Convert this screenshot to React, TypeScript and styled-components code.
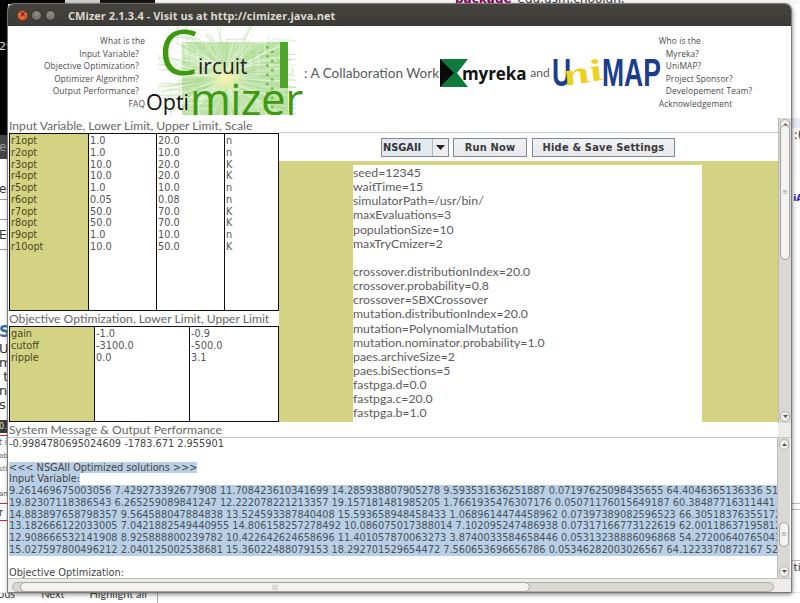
import React from "react";
import styled, { createGlobalStyle } from "styled-components";

const Global = createGlobalStyle`
  html, body { margin: 0; padding: 0; background: #fff; }
  #root { width: 800px; height: 603px; }
`;

const UI = `"Open Sans", "Noto Sans", sans-serif`;
const LT = `Lato, "Open Sans", sans-serif`;
const DV = `"DejaVu Sans", sans-serif`;
const OLIVE = "#d4d283";

const Desktop = styled.div`
  position: relative; width: 800px; height: 603px; overflow: hidden; background: #fff;
  display: flex; flex-direction: column;
`;
const TopStrip = styled.div`
  height: 4px; flex: none; display: flex; overflow: hidden;
`;
const TopSeg = styled.div<{ $w: number; $c: string }>`
  width: ${p => p.$w}px; flex: none; background: ${p => p.$c};
`;
const TopCode = styled.div`
  flex: 1; display: flex; gap: 6px; padding-left: 300px; margin-top: -8px; background: #f6f6f6; height: 20px;
  font: 400 12px/14px ${DV}; color: #333; white-space: nowrap;
`;
const Keyword = styled.b`
  color: #7f0055;
`;
const MiddleStrip = styled.div`
  height: 588px; flex: none; display: flex; justify-content: space-between;
`;
const Side = styled.div<{ $w: number }>`
  width: ${p => p.$w}px; flex: none; display: flex; flex-direction: column; overflow: hidden;
`;
const Block = styled.div<{ $h: number; $bg: string; $fg: string; $size: number; $line?: string; $bold?: boolean }>`
  height: ${p => p.$h}px; flex: none; background: ${p => p.$bg}; color: ${p => p.$fg};
  font: ${p => (p.$bold ? 700 : 400)} ${p => p.$size}px/${p => p.$h}px ${DV}; white-space: nowrap; text-indent: -1px;
  box-sizing: border-box; ${p => (p.$line ? `border-bottom: 1px solid ${p.$line};` : "")}
`;
const BottomStrip = styled.div`
  height: 11px; flex: none; overflow: hidden; display: flex; border-top: 1px solid #e4e4e4; box-sizing: border-box;
`;
const BottomText = styled.span<{ $ml: number }>`
  margin: -6px 0 0 ${p => p.$ml}px; font: 400 11px/14px ${LT}; color: #444; white-space: nowrap; height: 14px;
`;
const BottomRule = styled.div`
  width: 1px; height: 11px; background: #aaa; margin-left: 10px;
`;

const Win = styled.div`
  position: absolute; left: 8px; top: 4px; width: 783px; height: 588px;
  display: flex; flex-direction: column;
  border-radius: 6px 6px 0 0; background: #fff;
  box-shadow: 0 0 1px 1px #777, 1px 2px 5px rgba(0,0,0,.55);
`;
const TitleBar = styled.div`
  height: 22px; flex: none; display: flex; align-items: center; gap: 3px; padding-left: 9px;
  background: linear-gradient(#45443f, #3b3a36); border-radius: 6px 6px 0 0;
`;
const Dot = styled.span<{ $close?: boolean }>`
  width: 11px; height: 11px; border-radius: 50%; box-sizing: border-box;
  border: 1px solid ${p => (p.$close ? "#8f3513" : "#33322e")};
  background: ${p => (p.$close ? "radial-gradient(circle at 50% 35%, #f5824f, #dc4c1b)" : "radial-gradient(circle at 50% 30%, #8f8e88, #65645e)")};
  display: flex; align-items: center; justify-content: center;
  font: 700 8px/1 ${DV}; color: #40231a;
`;
const Title = styled.span`
  margin-left: 9px; font: 700 11px/1 ${UI}; color: #dcd9d0; letter-spacing: .05px; white-space: nowrap;
`;

const Header = styled.div`
  height: 92px; flex: none; display: flex; background: #fff;
`;
const LinkCol = styled.div<{ $w: number }>`
  width: ${p => p.$w}px; flex: none; padding-top: 9px; box-sizing: border-box;
`;
const Link = styled.div<{ $inset?: number; $right?: boolean }>`
  height: 12.5px; font: 400 8.4px/12.5px ${UI}; letter-spacing: .1px; color: #4a4a4a; white-space: nowrap;
  text-align: ${p => (p.$right ? "right" : "left")};
  ${p => (p.$right ? `padding-right: ${p.$inset ?? 0}px;` : `padding-left: ${p.$inset ?? 0}px;`)}
`;
const LogoBox = styled.div`
  width: 158px; height: 92px; margin-left: 1px; flex: none; position: relative;
`;
const Pcb = styled.svg`
  position: absolute; left: 12px; top: 0; width: 138px; height: 90px;
`;
const LogoC = styled.span`
  position: absolute; left: 13px; top: -6px; font: 400 62px/1 ${UI}; color: #3d9a0e;
`;
const LogoIrcuit = styled.span`
  position: absolute; left: 52px; top: 30px; font: 400 21px/1 ${UI}; color: #222;
`;
const LogoOpti = styled.span`
  position: absolute; left: 0; top: 65px; font: 400 21.5px/1 ${UI}; color: #111;
`;
const LogoMizer = styled.span`
  position: absolute; left: 44px; top: 50px; font: 400 44px/1 ${UI}; color: #3d9a0e; letter-spacing: -.5px;
`;
const Tagline = styled.div`
  width: 135px; flex: none; font: 400 13.6px/92px ${LT}; color: #5a5a5a; white-space: nowrap;
  padding-top: 1px; box-sizing: border-box; height: 92px;
`;
const MyrekaBox = styled.div`
  display: flex; align-items: center; height: 92px; flex: none; margin-top: 1px;
`;
const MyrekaMark = styled.svg`
  width: 30px; height: 30px; flex: none;
`;
const MyrekaText = styled.span`
  font: 700 17px/1 ${UI}; color: #111; margin-left: -7px; letter-spacing: -.1px; position: relative;
`;
const And = styled.span`
  font: 400 12px/1 ${LT}; color: #5a5a5a; margin: 0 2px 0 4px;
`;
const Uni = styled.div`
  width: 107px; height: 30px; flex: none; position: relative;
`;
const UniBlue = styled.span<{ $x: number }>`
  position: absolute; left: ${p => p.$x}px; top: -4px; font: 700 39px/38px "Liberation Sans", sans-serif;
  color: #1b3d8c; transform-origin: left center; transform: scaleX(.68);
`;
const UniYellow = styled.span`
  position: absolute; left: 11px; top: 2px; font: italic 700 31px/32px "Liberation Serif", serif; color: #f0d21c;
  transform: scaleX(1.55) rotate(-14deg); transform-origin: left center;
`;

const Upper = styled.div`
  height: 305px; flex: none; display: flex; background: #fff;
`;
const LeftCol = styled.div`
  width: 270px; margin-left: 1px; flex: none; display: flex; flex-direction: column;
`;
const Label = styled.div<{ $h: number }>`
  height: ${p => p.$h}px; flex: none; font: 400 12.15px/${p => p.$h}px ${LT}; color: #666; white-space: nowrap; background: #fff;
`;
const Grid = styled.div<{ $cols: string; $h: number }>`
  height: ${p => p.$h}px; flex: none; display: grid; grid-template-columns: ${p => p.$cols};
  box-sizing: border-box; border: 1px solid #111; gap: 1px; background: #111;
`;
const Col = styled.div<{ $head?: boolean }>`
  background: ${p => (p.$head ? OLIVE : "#fff")}; padding: 1px 0 0 1px; overflow: hidden;
`;
const Cell = styled.div<{ $head?: boolean }>`
  font: 400 9.75px/11.78px ${DV}; height: 11.78px; white-space: nowrap; color: ${p => (p.$head ? "#4c4a22" : "#555")};
`;
const RightCol = styled.div`
  flex: 1; margin-top: 14px; border-top: 1px solid #c8c8c8; display: flex; flex-direction: column; min-width: 0;
`;
const Toolbar = styled.div`
  height: 28px; flex: none; display: flex; align-items: center; padding-left: 102px; gap: 4px; background: #fff; box-sizing: border-box;
`;
const Combo = styled.div`
  width: 68px; height: 19px; box-sizing: border-box; border: 1px solid #7a8a99; display: flex; background: #eeeef1;
`;
const ComboVal = styled.div`
  flex: 1; font: 700 9.8px/17px ${DV}; color: #333; padding-left: 1px; background: #e4e8ef; border-right: 1px solid #a3b8cc;
`;
const ComboBtn = styled.div`
  width: 15px; display: flex; align-items: center; justify-content: center;
`;
const Tri = styled.svg`
  width: 9px; height: 5px;
`;
const Btn = styled.div<{ $w: number; $ml?: number }>`
  width: ${p => p.$w}px; height: 19px; box-sizing: border-box; border: 1px solid #7a8a99; margin-left: ${p => p.$ml ?? 0}px;
  background: linear-gradient(#f1f1f3, #e9e9ee); text-align: center;
  font: 700 9.9px/17px ${DV}; color: #3a3a3a; letter-spacing: .2px; white-space: nowrap;
`;
const Olive = styled.div`
  height: 261px; flex: none; background: ${OLIVE}; padding: 4px 0 0 74px; box-sizing: border-box; overflow: hidden;
`;
const Config = styled.div`
  width: 349px; height: 257px; background: #fff; overflow: hidden; padding-top: 1px; box-sizing: border-box;
`;
const ConfigLine = styled.div`
  height: 14.15px; font: 400 12.3px/14.15px ${LT}; color: #5c5c5c; white-space: nowrap;
`;
const VBar = styled.div<{ $h: number }>`
  width: 13px; height: ${p => p.$h}px; flex: none; background: #dad8d4; position: relative; border-left: 1px solid #bdbbb6; box-sizing: border-box;
`;
const Thumb = styled.div<{ $top: number; $h: number }>`
  position: absolute; left: 1px; right: 1px; top: ${p => p.$top}px; height: ${p => p.$h}px; background: #f4f3f1;
  border: 1px solid #a3a19c; border-radius: 6px; box-sizing: border-box;
  display: flex; align-items: center; justify-content: center; font: 400 7px/1 ${DV}; color: #9a9a96;
`;
const Arrow = styled.div<{ $bottom?: boolean }>`
  position: absolute; left: 1px; right: 1px; height: 11px; background: #f0efed; border: 1px solid #b2b0ab; border-radius: 6px; box-sizing: border-box;
  ${p => (p.$bottom ? "bottom: 1px;" : "top: 1px;")}
  display: flex; align-items: center; justify-content: center;
`;
const Lower = styled.div`
  flex: 1; min-height: 0; display: flex; flex-direction: column; background: #fff;
`;
const SysRow = styled.div`
  height: 14px; flex: none; display: flex; padding-left: 1px; border-bottom: 1px solid #c9c9c9;
`;
const SysFill = styled.div`
  flex: 1;
`;
const Corner = styled.div`
  width: 13px; flex: none; background: #edecea;
`;
const LogRow = styled.div`
  height: 140px; flex: none; display: flex;
`;
const Log = styled.div`
  width: 768px; margin-left: 1px; flex: none; overflow: hidden; background: #fff;
`;
const LogLine = styled.div`
  height: 11.78px; font: 400 9.75px/11.78px ${DV}; color: #444; white-space: nowrap; overflow: hidden;
`;
const Sel = styled.span`
  background: #b8cfe5; display: inline-block;
`;
const SelLine = styled(LogLine)`
  background: #b8cfe5; color: #47525c;
`;
const HBar = styled.div`
  flex: 1; background: #edecea; border-top: 1px solid #c4c2bd; box-sizing: border-box; padding: 3px 17px 0 4px;
`;
const HTrack = styled.div`
  height: 10px; background: #dad8d4; border-radius: 5px; border: 1px solid #b2b0ab; box-sizing: border-box; padding-left: 7px;
`;
const HThumb = styled.div`
  width: 510px; height: 10px; margin-top: -1px; background: #f4f3f1; border: 1px solid #a3a19c; border-radius: 5px; box-sizing: border-box;
  text-align: center; font: 400 6px/8px ${DV}; color: #9a9a96;
`;

const inputs = [
  ["r1opt", "1.0", "20.0", "n"], ["r2opt", "1.0", "10.0", "n"], ["r3opt", "10.0", "20.0", "K"], ["r4opt", "10.0", "20.0", "K"],
  ["r5opt", "1.0", "10.0", "n"], ["r6opt", "0.05", "0.08", "n"], ["r7opt", "50.0", "70.0", "K"], ["r8opt", "50.0", "70.0", "K"],
  ["r9opt", "1.0", "10.0", "n"], ["r10opt", "10.0", "50.0", "K"],
];
const objectives = [["gain", "-1.0", "-0.9"], ["cutoff", "-3100.0", "-500.0"], ["ripple", "0.0", "3.1"]];
const config = ["seed=12345", "waitTime=15", "simulatorPath=/usr/bin/", "maxEvaluations=3", "populationSize=10", "maxTryCmizer=2", "\u00a0",
  "crossover.distributionIndex=20.0", "crossover.probability=0.8", "crossover=SBXCrossover", "mutation.distributionIndex=20.0",
  "mutation=PolynomialMutation", "mutation.nominator.probability=1.0", "paes.archiveSize=2", "paes.biSections=5", "fastpga.d=0.0", "fastpga.c=20.0", "fastpga.b=1.0", "fastpga.a=20.0"];
const solutions = [
  "9.261469675003056 7.429273392677908 11.708423610341699 14.285938807905278 9.593531636251887 0.07197625098435655 64.4046365136336 51.2",
  "19.82307118386543 6.265259089841247 12.222078221213357 19.157181481985205 1.7661935476307176 0.05071176015649187 60.38487716311441",
  "14.883897658798357 9.564588047884838 13.524593387840408 15.593658948458433 1.0689614474458962 0.07397389082596523 66.30518376355172",
  "13.182666122033005 7.0421882549440955 14.806158257278492 10.086075017388014 7.102095247486938 0.07317166773122619 62.00118637195812",
  "12.908666532141908 8.925888800239782 10.422642624658696 11.401057870063273 3.8740033584658446 0.05313238886096868 54.27200640765043",
  "15.027597800496212 2.040125002538681 15.36022488079153 18.292701529654472 7.560653696656786 0.05346282003026567 64.1223370872167 52.1",
];

type B = { h: number; bg?: string; fg?: string; size?: number; text?: string; line?: string; bold?: boolean };
const leftBlocks: B[] = [
  { h: 33, bg: "#050505" }, { h: 20, bg: "#050505", fg: "#ddd", size: 11, text: "29" }, { h: 78, bg: "#050505" },
  { h: 24, bg: "#454545", fg: "#999", size: 12, text: "en" },
  { h: 19 }, { h: 22, fg: "#333", size: 12, text: "er", line: "#999" }, { h: 20, line: "#999" }, { h: 30, fg: "#333", size: 12, text: "EC", line: "#999" },
  { h: 71 }, { h: 21, fg: "#2a6fa8", size: 16, text: "S", bold: true },
  { h: 14, fg: "#333", size: 13, text: "Us" }, { h: 14, fg: "#333", size: 13, text: "m" }, { h: 14, fg: "#333", size: 13, text: "\u00a0t" },
  { h: 14, fg: "#333", size: 13, text: "nc" }, { h: 14, fg: "#333", size: 13, text: "s" }, { h: 8 },
  { h: 13, bg: "#3a3a3a", fg: "#ddd", size: 8, text: "0." }, { h: 3, line: "#d22" },
  { h: 14, fg: "#666", size: 8, text: "t i" }, { h: 13, fg: "#666", size: 7, text: "ab" }, { h: 13, fg: "#666", size: 7, text: "sti" }, { h: 12 },
  { h: 13, fg: "#555", size: 7, text: "an" }, { h: 3, line: "#d22" }, { h: 17, fg: "#333", size: 10, text: "r", line: "#d22" },
];
const rightBlocks: B[] = [
  { h: 114 }, { h: 10, bg: "#e6ebf7" }, { h: 14, fg: "#333", size: 12, text: "\u00a0:(" }, { h: 50 },
  { h: 12, fg: "#2222cc", size: 9, text: "\u00a0iA", bold: true }, { h: 300, line: "#bbb" }, { h: 6, line: "#bbb" }, { h: 51, line: "#bbb" },
  { h: 14, fg: "#444", size: 11, text: "\u00a0ti" },
];

// PCB artwork behind the logo: traces radiating from a glowing centre towards the edges of the board.
function pcbTraces() {
  let s = 7;
  const r = () => ((s = (s * 16807) % 2147483647) / 2147483647);
  const out: { d: string; o: number; c: string }[] = [];
  for (let i = 0; i < 260; i++) {
    const a = r() * Math.PI * 2;
    const r0 = 4 + r() * 14;
    const r1 = 20 + r() * 50;
    const x0 = 68 + Math.cos(a) * r0, y0 = 51 + Math.sin(a) * r0;
    const x1 = 68 + Math.cos(a) * r1 * 1.3, y1 = 51 + Math.sin(a) * r1 * .8;
    const horiz = r() > .5;
    const x2 = horiz ? x1 + (x1 > 68 ? 1 : -1) * r() * 30 : x1;
    const y2 = horiz ? y1 : y1 + (y1 > 51 ? 1 : -1) * r() * 30;
    out.push({
      d: `M${x0.toFixed(1)} ${y0.toFixed(1)}L${x1.toFixed(1)} ${y1.toFixed(1)}L${x2.toFixed(1)} ${y2.toFixed(1)}`,
      o: .3 + r() * .45,
      c: r() > .55 ? "#ffffff" : "#a5d78c",
    });
  }
  return out;
}
const traces = pcbTraces();

const ArrowIcon = ({ dir }: { dir: "up" | "down" }) => (
  <svg width="7" height="5" viewBox="0 0 7 5"><path d={dir === "up" ? "M3.5 1L6 4H1z" : "M3.5 4L6 1H1z"} fill="#555" /></svg>
);

const Strip = ({ items, w }: { items: B[]; w: number }) => (
  <Side $w={w}>
    {items.map((b, i) => (
      <Block key={i} $h={b.h} $bg={b.bg ?? "#fff"} $fg={b.fg ?? "#333"} $size={b.size ?? 10} $line={b.line} $bold={b.bold}>{b.text}</Block>
    ))}
  </Side>
);

export default function App() {
  return (
    <Desktop>
      <Global />
      <TopStrip>
        <TopSeg $w={65} $c="#050505" />
        <TopSeg $w={35} $c="#cfcfcf" />
        <TopSeg $w={55} $c="#151515" />
        <TopCode><Keyword>package</Keyword><span>edu.usm.choojun;</span></TopCode>
      </TopStrip>
      <MiddleStrip>
        <Strip items={leftBlocks} w={8} />
        <Strip items={rightBlocks} w={9} />
      </MiddleStrip>
      <BottomStrip>
        <BottomText $ml={-2}>ous</BottomText>
        <BottomText $ml={26}>Next</BottomText>
        <BottomText $ml={25}>Highlight all</BottomText>
        <BottomRule />
      </BottomStrip>

      <Win>
        <TitleBar>
          <Dot $close>×</Dot>
          <Dot />
          <Dot />
          <Title>CMizer 2.1.3.4 - Visit us at http://cimizer.java.net</Title>
        </TitleBar>
        <Header>
          <LinkCol $w={137}>
            <Link $right>What is the</Link>
            <Link $right $inset={6}>Input Variable?</Link>
            <Link $right $inset={6}>Objective Optimization?</Link>
            <Link $right $inset={6}>Optimizer Algorithm?</Link>
            <Link $right $inset={6}>Output Performance?</Link>
            <Link $right>FAQ</Link>
          </LinkCol>
          <LogoBox>
            <Pcb viewBox="0 0 138 90">
              <defs>
                <radialGradient id="glow" cx="50%" cy="50%" r="50%">
                  <stop offset="0%" stopColor="#fff6b0" />
                  <stop offset="45%" stopColor="#e3eeb0" stopOpacity=".8" />
                  <stop offset="100%" stopColor="#d9edb4" stopOpacity="0" />
                </radialGradient>
              </defs>
              <rect x="24" y="16" width="106" height="73" fill="#bfe3a9" />
              {traces.map((t, i) => (
                <path key={i} d={t.d} fill="none" stroke={t.c} strokeOpacity={t.o} strokeWidth=".8" />
              ))}
              <rect x="122" y="16" width="8" height="46" fill="#4ea52c" />
              {Array.from({ length: 14 }).map((_, i) => (
                <rect key={i} x={108 + (i % 2) * 5} y={20 + i * 4.6} width="2.5" height="2.5" fill="#6fbb4e" />
              ))}
              <ellipse cx="68" cy="52" rx="24" ry="18" fill="url(#glow)" />
            </Pcb>
            <LogoC>C</LogoC>
            <LogoIrcuit>ircuit</LogoIrcuit>
            <LogoMizer>mizer</LogoMizer>
            <LogoOpti>Opti</LogoOpti>
          </LogoBox>
          <Tagline>: A Collaboration Work of</Tagline>
          <MyrekaBox>
            <MyrekaMark viewBox="0 0 30 30">
              <path d="M1 1H29L18 15L29 29H1z" fill="#0e7a3c" />
              <path d="M1 1L15 15L1 29z" fill="#0b0b0b" />
            </MyrekaMark>
            <MyrekaText>myreka</MyrekaText>
            <And>and</And>
            <Uni>
              <UniBlue $x={0}>U</UniBlue>
              <UniBlue $x={50}>MAP</UniBlue>
              <UniYellow>ni</UniYellow>
            </Uni>
          </MyrekaBox>
          <LinkCol $w={100}>
            <Link>Who is the</Link>
            <Link $inset={7}>Myreka?</Link>
            <Link $inset={7}>UniMAP?</Link>
            <Link $inset={7}>Project Sponsor?</Link>
            <Link $inset={7}>Developement Team?</Link>
            <Link>Acknowledgement</Link>
          </LinkCol>
        </Header>
        <Upper>
          <LeftCol>
            <Label $h={15}>Input Variable, Lower Limit, Upper Limit, Scale</Label>
            <Grid $cols="78px 67px 67px 1fr" $h={178}>
              {[0, 1, 2, 3].map(c => (
                <Col key={c} $head={c === 0}>
                  {inputs.map((row, i) => <Cell key={i} $head={c === 0}>{row[c]}</Cell>)}
                </Col>
              ))}
            </Grid>
            <Label $h={15}>Objective Optimization, Lower Limit, Upper Limit</Label>
            <Grid $cols="84px 94px 1fr" $h={96}>
              {[0, 1, 2].map(c => (
                <Col key={c} $head={c === 0}>
                  {objectives.map((row, i) => <Cell key={i} $head={c === 0}>{row[c]}</Cell>)}
                </Col>
              ))}
            </Grid>
          </LeftCol>
          <RightCol>
            <Toolbar>
              <Combo>
                <ComboVal>NSGAII</ComboVal>
                <ComboBtn><Tri viewBox="0 0 9 5"><path d="M0 0H9L4.5 5z" fill="#222" /></Tri></ComboBtn>
              </Combo>
              <Btn $w={74}>Run Now</Btn>
              <Btn $w={143} $ml={1}>Hide &amp; Save Settings</Btn>
            </Toolbar>
            <Olive>
              <Config>
                {config.map((l, i) => <ConfigLine key={i}>{l}</ConfigLine>)}
              </Config>
            </Olive>
          </RightCol>
          <VBar $h={305}>
            <Arrow><ArrowIcon dir="up" /></Arrow>
            <Thumb $top={7} $h={135}>≡</Thumb>
            <Arrow $bottom><ArrowIcon dir="down" /></Arrow>
          </VBar>
        </Upper>
        <Lower>
          <SysRow>
            <Label $h={14}>System Message &amp; Output Performance</Label>
            <SysFill />
            <Corner />
          </SysRow>
          <LogRow>
            <Log>
              <LogLine>-0.9984780695024609 -1783.671 2.955901</LogLine>
              <LogLine>&nbsp;</LogLine>
              <LogLine><Sel>&lt;&lt;&lt; NSGAII Optimized solutions &gt;&gt;&gt;</Sel></LogLine>
              <LogLine><Sel>Input Variable:</Sel></LogLine>
              {solutions.map((s, i) => <SelLine key={i}>{s}</SelLine>)}
              <LogLine>&nbsp;</LogLine>
              <LogLine>Objective Optimization:</LogLine>
            </Log>
            <VBar $h={140}>
              <Arrow><ArrowIcon dir="up" /></Arrow>
              <Thumb $top={84} $h={25}>≡</Thumb>
              <Arrow $bottom><ArrowIcon dir="down" /></Arrow>
            </VBar>
          </LogRow>
          <HBar>
            <HTrack>
              <HThumb>|||</HThumb>
            </HTrack>
          </HBar>
        </Lower>
      </Win>
    </Desktop>
  );
}
